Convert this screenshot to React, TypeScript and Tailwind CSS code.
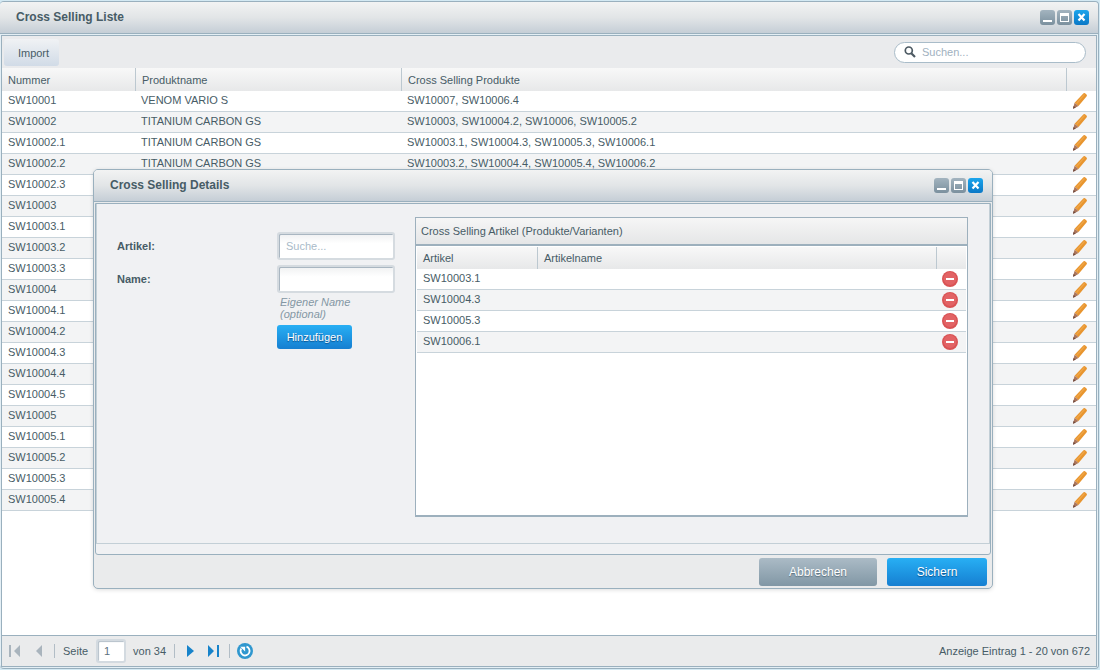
import type { ReactNode } from 'react';

interface Product {
  number: string;
  name?: string;
  crossSelling?: string;
}

const products: Product[] = [
  { number: 'SW10001', name: 'VENOM VARIO S', crossSelling: 'SW10007, SW10006.4' },
  { number: 'SW10002', name: 'TITANIUM CARBON GS', crossSelling: 'SW10003, SW10004.2, SW10006, SW10005.2' },
  { number: 'SW10002.1', name: 'TITANIUM CARBON GS', crossSelling: 'SW10003.1, SW10004.3, SW10005.3, SW10006.1' },
  { number: 'SW10002.2', name: 'TITANIUM CARBON GS', crossSelling: 'SW10003.2, SW10004.4, SW10005.4, SW10006.2' },
  { number: 'SW10002.3' },
  { number: 'SW10003' },
  { number: 'SW10003.1' },
  { number: 'SW10003.2' },
  { number: 'SW10003.3' },
  { number: 'SW10004' },
  { number: 'SW10004.1' },
  { number: 'SW10004.2' },
  { number: 'SW10004.3' },
  { number: 'SW10004.4' },
  { number: 'SW10004.5' },
  { number: 'SW10005' },
  { number: 'SW10005.1' },
  { number: 'SW10005.2' },
  { number: 'SW10005.3' },
  { number: 'SW10005.4' },
];

const articles = ['SW10003.1', 'SW10004.3', 'SW10005.3', 'SW10006.1'];

function WindowButton({ label, active, children }: { label: string; active?: boolean; children: ReactNode }) {
  return (
    <button
      type="button"
      aria-label={label}
      className={
        active
          ? 'h-[15px] w-[15px] rounded-[3px] bg-linear-to-b from-[#1ba5ec] to-[#0b78c6]'
          : 'h-[15px] w-[15px] rounded-[3px] bg-linear-to-b from-[#a3b4bf] to-[#7b909e]'
      }
    >
      <svg viewBox="0 0 15 15" className="block h-[15px] w-[15px]">{children}</svg>
    </button>
  );
}

function TitleBar({ title }: { title: string }) {
  return (
    <header className="flex h-8 items-center justify-between rounded-t border-b border-[#9ab0be] bg-linear-to-b from-[#f2f3f3] via-[#e2e5e7] to-[#c5ced6] pr-[9px] pl-4">
      <h2 className="pb-[2px] text-[12px] leading-4 font-bold text-[#475c66]">{title}</h2>
      <div className="flex gap-[2px]">
        <WindowButton label="Minimieren">
          <path d="M3 10h9v2H3z" fill="#fff" />
        </WindowButton>
        <WindowButton label="Maximieren">
          <path d="M3 3h9v9H3zM4 6v5h7V6z" fill="#fff" fillRule="evenodd" />
        </WindowButton>
        <WindowButton label="Schließen" active>
          <path d="M4.500 4l6 6.500M10.500 4l-6 6.500" stroke="#fff" strokeWidth="2.200" />
        </WindowButton>
      </div>
    </header>
  );
}

function PencilIcon() {
  return (
    <svg viewBox="0 0 16 17" className="block h-[17px] w-4">
      <path d="M11.300 1.500q.8-.9 1.700-.2l1.500 1.200q.9.800.2 1.700L6.500 13.900 2.600 10.800z" fill="#e8952f" />
      <path d="M12.500 2.400L4.500 11.600" stroke="#efa648" strokeWidth="1.400" />
      <path d="M2.600 10.800l3.900 3.100L1.700 16.600q-.7.200-.6-.6z" fill="#ad765a" />
      <path d="M1.500 14l2.400 1.500-2.200 1.100q-.7.200-.6-.6z" fill="#714b40" />
    </svg>
  );
}

function DeleteIcon() {
  return (
    <svg viewBox="0 0 16 16" className="block h-4 w-4">
      <circle cx="8" cy="8" r="8" fill="#d95354" />
      <circle cx="8" cy="7.500" r="6.500" fill="#e26365" />
      <rect x="4" y="7" width="8" height="2" fill="#fff" />
    </svg>
  );
}

function ProductTable() {
  return (
    <table className="w-full table-fixed border-separate border-spacing-0 text-left">
      <colgroup>
        <col className="w-[134px]" />
        <col className="w-[266px]" />
        <col />
        <col className="w-[29px]" />
      </colgroup>
      <thead>
        <tr className="h-[23px] bg-linear-to-b from-[#f8f8f8] to-[#e7e8e9]">
          <th className="border-r border-[#bcc8d0] px-[6px] font-normal">Nummer</th>
          <th className="border-r border-[#bcc8d0] px-[6px] font-normal">Produktname</th>
          <th className="border-r border-[#bcc8d0] px-[6px] font-normal">Cross Selling Produkte</th>
          <th aria-label="Aktionen" />
        </tr>
      </thead>
      <tbody>
        {products.map((product) => (
          <tr key={product.number} className="h-[21px] bg-white even:bg-[#f3f4f5]">
            <td className="border-b border-[#c8d3da] px-[6px] pb-[3px]">{product.number}</td>
            <td className="border-b border-[#c8d3da] px-[5px] pb-[3px]">{product.name}</td>
            <td className="border-b border-[#c8d3da] px-[5px] pb-[3px]">{product.crossSelling}</td>
            <td className="border-b border-[#c8d3da] pb-px pl-[5px]">
              <button type="button" aria-label="Bearbeiten" className="block">
                <PencilIcon />
              </button>
            </td>
          </tr>
        ))}
      </tbody>
    </table>
  );
}

function Separator() {
  return <span className="h-[14px] w-px bg-[#b2bdc6]" />;
}

function Pagination() {
  return (
    <footer className="flex h-[31px] shrink-0 items-center justify-between border-t border-[#9ab0be] bg-[#eaebec] pr-[6px] pl-[7px]">
      <div className="flex items-center">
        <button type="button" aria-label="Erste Seite" className="mr-4">
          <svg viewBox="0 0 11 12" className="block h-3 w-[11px]">
            <path d="M0 0h2v12H0zM11 0v12L5 6z" fill="#a9b4bd" />
          </svg>
        </button>
        <button type="button" aria-label="Vorherige Seite" className="mr-3">
          <svg viewBox="0 0 6 12" className="block h-3 w-[6px]">
            <path d="M6 0v12L0 6z" fill="#a9b4bd" />
          </svg>
        </button>
        <Separator />
        <label htmlFor="page" className="mr-2 ml-2">Seite</label>
        <input
          id="page"
          defaultValue="1"
          className="h-6 w-[30px] rounded-[3px] border-2 border-[#d3dae0] bg-white px-[6px] text-[11px] text-[#5d7180] shadow-[inset_1px_1px_1px_#b4bfc9]"
        />
        <span className="mr-2 ml-[7px]">von 34</span>
        <Separator />
        <button type="button" aria-label="Nächste Seite" className="mr-[14px] ml-3">
          <svg viewBox="0 0 7 12" className="block h-3 w-[7px]">
            <path d="M0 0v12l7-6z" fill="#1783ca" />
          </svg>
        </button>
        <button type="button" aria-label="Letzte Seite" className="mr-[10px]">
          <svg viewBox="0 0 11 12" className="block h-3 w-[11px]">
            <path d="M0 0v12l6-6zM9 0h2v12H9z" fill="#1783ca" />
          </svg>
        </button>
        <Separator />
        <button type="button" aria-label="Aktualisieren" className="ml-[7px]">
          <svg viewBox="0 0 16 16" className="block h-4 w-4">
            <circle cx="8" cy="8" r="8" fill="#2f97cf" />
            <path d="M9.500 3.700A4.500 4.500 0 1 1 4.300 5.500" fill="none" stroke="#fff" strokeWidth="1.800" />
            <path d="M3.200 3.700h4.900v4.900z" fill="#fff" />
          </svg>
        </button>
      </div>
      <span>Anzeige Eintrag 1 - 20 von 672</span>
    </footer>
  );
}

function ArticlePanel() {
  return (
    <div className="h-[300px] flex-1 border border-b-2 border-[#9db0bd] bg-white">
      <h3 className="flex h-7 items-center border-b-2 border-[#9db0bd] bg-linear-to-b from-[#f6f6f6] to-[#e5e6e7] px-[5px]">
        Cross Selling Artikel (Produkte/Varianten)
      </h3>
      <div className="px-px pt-px">
        <table className="w-full table-fixed border-separate border-spacing-0 text-left">
          <colgroup>
            <col className="w-[121px]" />
            <col />
            <col className="w-[29px]" />
          </colgroup>
          <thead>
            <tr className="h-[22px] bg-linear-to-b from-[#f8f8f8] to-[#e7e8e9]">
              <th className="border-r border-[#bcc8d0] px-[6px] font-normal">Artikel</th>
              <th className="border-r border-[#bcc8d0] px-[6px] font-normal">Artikelname</th>
              <th aria-label="Aktionen" />
            </tr>
          </thead>
          <tbody>
            {articles.map((article) => (
              <tr key={article} className="h-[21px] bg-white even:bg-[#f3f4f5]">
                <td className="border-b border-[#c8d3da] px-[6px] pb-[3px]">{article}</td>
                <td className="border-b border-[#c8d3da]" />
                <td className="border-b border-[#c8d3da] pl-[5px]">
                  <button type="button" aria-label="Entfernen" className="block">
                    <DeleteIcon />
                  </button>
                </td>
              </tr>
            ))}
          </tbody>
        </table>
      </div>
    </div>
  );
}

const fieldClass =
  'h-7 w-[118px] rounded-[3px] border-2 border-[#d5dbe0] bg-white bg-linear-to-b from-[#f0f1f2] to-white to-40% px-[7px] text-[11px] shadow-[inset_1px_1px_0_#a9b6c1] placeholder:text-[#a9bac8]';

function DetailsDialog() {
  return (
    <div
      role="dialog"
      aria-label="Cross Selling Details"
      className="absolute top-[169px] left-[93px] w-[900px] rounded-[5px] border border-[#9ab0be] bg-[#eaebec] shadow-[0_1px_4px_#00000022]"
    >
      <TitleBar title="Cross Selling Details" />
      <div className="mx-px mt-px rounded-b-[3px] border border-[#9ab0be] bg-[#f0f1f3]">
        <div className="flex items-start border-x border-b border-[#c3cfd6] pt-[13px] pr-[21px] pb-[26px] pl-5">
          <form className="mt-[15px] mr-5 grid w-[278px] grid-cols-[160px_118px]">
            <label htmlFor="article" className="pt-[6px] font-bold">Artikel:</label>
            <input id="article" placeholder="Suche..." className={fieldClass} />
            <label htmlFor="name" className="mt-[5px] pt-[6px] font-bold">Name:</label>
            <div className="mt-[5px]">
              <input id="name" className={fieldClass} />
              <p className="mt-[3px] pl-[3px] leading-3 text-[#8497a4] italic">
                Eigener Name
                <br />
                (optional)
              </p>
              <button
                type="button"
                className="mt-[5px] h-6 w-[75px] rounded-[3px] bg-linear-to-b from-[#28aff4] to-[#167fd1] text-white [text-shadow:0_1px_1px_#0a508c]"
              >
                Hinzufügen
              </button>
            </div>
          </form>
          <ArticlePanel />
        </div>
        <div className="h-[10px]" />
      </div>
      <div className="flex h-[33px] items-center justify-end gap-[10px] pr-[5px] text-[12px]">
        <button
          type="button"
          className="h-7 w-[118px] rounded-[3px] bg-linear-to-b from-[#abbbc6] to-[#8197a5] text-white [text-shadow:0_1px_1px_#5a6f7d]"
        >
          Abbrechen
        </button>
        <button
          type="button"
          className="h-7 w-[100px] rounded-[3px] bg-linear-to-b from-[#28aff4] to-[#167fd1] text-white [text-shadow:0_1px_1px_#0a508c]"
        >
          Sichern
        </button>
      </div>
    </div>
  );
}

export default function App() {
  return (
    <main className="relative flex h-screen flex-col bg-[#d3e9f3] pt-px pr-px pb-px font-['Liberation_Sans',Arial,sans-serif] text-[11px] leading-4 text-[#475c66]">
      <section className="flex min-h-0 flex-1 flex-col rounded-[4px] border-t border-r border-b border-[#9ab0be] bg-[#e4eff5]">
        <TitleBar title="Cross Selling Liste" />
        <div className="m-px flex min-h-0 flex-1 flex-col border border-[#9ab0be] bg-white">
          <div className="flex h-8 shrink-0 items-center justify-between bg-[#eaebed] pr-[10px] pl-[2px]">
            <button
              type="button"
              className="mt-px h-[27px] w-[55px] rounded-[3px] bg-linear-to-b from-[#f0f2f4] to-[#d1dbe7] pl-1"
            >
              Import
            </button>
            <label className="flex h-[21px] w-48 items-center rounded-full border border-[#a9bcc9] bg-white pl-[9px]">
              <svg viewBox="0 0 12 12" className="h-3 w-3 shrink-0">
                <circle cx="4.800" cy="4.500" r="3.500" fill="none" stroke="#4c5962" strokeWidth="1.700" />
                <path d="M7.300 7.300l3.700 3.700" stroke="#4c5962" strokeWidth="2.200" />
              </svg>
              <input
                aria-label="Suchen"
                placeholder="Suchen..."
                className="ml-[6px] w-full min-w-0 bg-transparent text-[11px] outline-none placeholder:text-[#9fb1c0]"
              />
            </label>
          </div>
          <div className="min-h-0 flex-1 overflow-hidden">
            <ProductTable />
          </div>
          <Pagination />
        </div>
      </section>
      <DetailsDialog />
    </main>
  );
}
